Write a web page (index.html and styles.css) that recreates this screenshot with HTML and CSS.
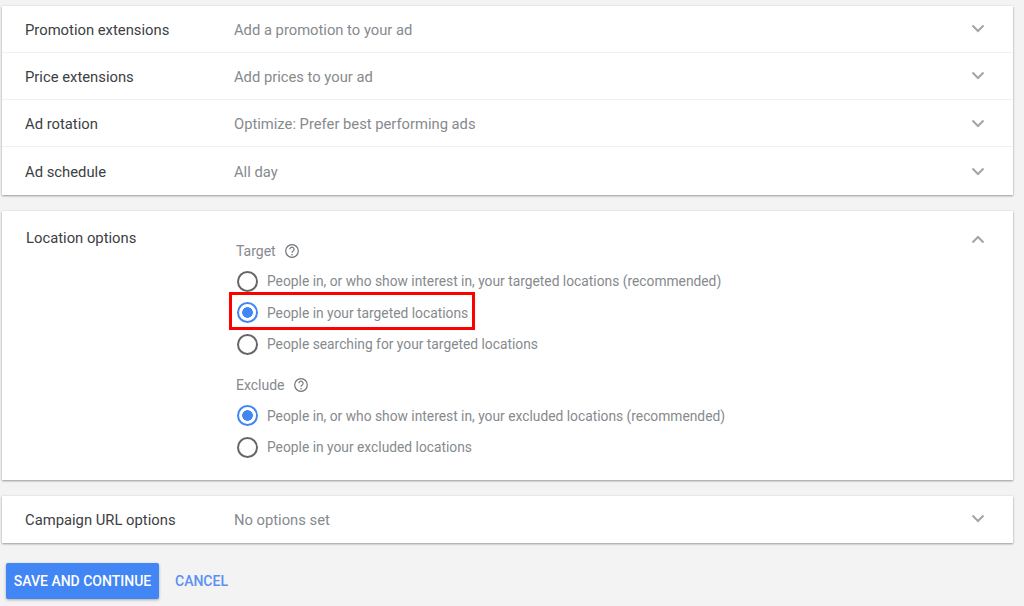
FILE: index.html
```html
<!DOCTYPE html>
<html lang="en">
<head>
<meta charset="utf-8">
<title>Campaign settings</title>
<link rel="stylesheet" href="styles.css">
</head>
<body>
<main class="page">
  <section class="card">
    <div class="row">
      <div class="label">Promotion extensions</div>
      <div class="value">Add a promotion to your ad</div>
      <svg class="chev" viewBox="0 0 14 9"><path d="M1.5 1.5 7 7l5.5-5.5"/></svg>
    </div>
    <div class="row">
      <div class="label">Price extensions</div>
      <div class="value">Add prices to your ad</div>
      <svg class="chev" viewBox="0 0 14 9"><path d="M1.5 1.5 7 7l5.5-5.5"/></svg>
    </div>
    <div class="row">
      <div class="label">Ad rotation</div>
      <div class="value">Optimize: Prefer best performing ads</div>
      <svg class="chev" viewBox="0 0 14 9"><path d="M1.5 1.5 7 7l5.5-5.5"/></svg>
    </div>
    <div class="row">
      <div class="label">Ad schedule</div>
      <div class="value">All day</div>
      <svg class="chev" viewBox="0 0 14 9"><path d="M1.5 1.5 7 7l5.5-5.5"/></svg>
    </div>
  </section>

  <section class="card expanded">
    <div class="label">Location options</div>
    <div class="options">
      <div class="group-title">Target
        <svg class="help" viewBox="0 0 16 16"><circle cx="8" cy="8" r="6.3"/><path d="M5.9 6.3a2.1 2.1 0 1 1 3.3 1.7c-.8.5-1.2.9-1.2 1.8"/><circle class="dot" cx="8" cy="11.8" r=".8"/></svg>
      </div>
      <div class="radio-list">
        <div class="radio-row"><span class="radio"></span>People in, or who show interest in, your targeted locations (recommended)</div>
        <div class="radio-row"><span class="radio on"></span>People in your targeted locations<span class="highlight"></span></div>
        <div class="radio-row"><span class="radio"></span>People searching for your targeted locations</div>
      </div>
      <div class="group-title second">Exclude
        <svg class="help" viewBox="0 0 16 16"><circle cx="8" cy="8" r="6.3"/><path d="M5.9 6.3a2.1 2.1 0 1 1 3.3 1.7c-.8.5-1.2.9-1.2 1.8"/><circle class="dot" cx="8" cy="11.8" r=".8"/></svg>
      </div>
      <div class="radio-list">
        <div class="radio-row"><span class="radio on"></span>People in, or who show interest in, your excluded locations (recommended)</div>
        <div class="radio-row"><span class="radio"></span>People in your excluded locations</div>
      </div>
    </div>
    <svg class="chev up" viewBox="0 0 14 9"><path d="M1.5 7.5 7 2l5.5 5.5"/></svg>
  </section>

  <section class="card">
    <div class="row single">
      <div class="label">Campaign URL options</div>
      <div class="value">No options set</div>
      <svg class="chev" viewBox="0 0 14 9"><path d="M1.5 1.5 7 7l5.5-5.5"/></svg>
    </div>
  </section>

  <div class="actions">
    <button class="btn-primary">SAVE AND CONTINUE</button>
    <button class="btn-link">CANCEL</button>
  </div>
</main>
</body>
</html>
```
FILE: styles.css
```css
* { box-sizing: border-box; }
html, body { margin: 0; height: 100%; }
body {
  background: #f3f3f3;
  font-family: Roboto, "Liberation Sans", sans-serif;
  font-size: 14px;
  overflow: hidden;
}
.page {
  display: flex;
  flex-direction: column;
  gap: 16px;
  padding: 5.5px 11px 0 2px;
}
.card {
  background: #fff;
  box-shadow: 0 1px 2px rgba(0,0,0,.36), 0 0 3px rgba(0,0,0,.06);
}
.row {
  display: flex;
  align-items: center;
  height: 47.33px;
  padding: 2px 28px 0 23px;
  border-bottom: 1px solid #f0f0f0;
}
.row:last-child { border-bottom: 0; }
.row.single { padding-top: 1px; }
.label {
  width: 209px;
  flex: none;
  color: #3c4043;
  font-size: 14.8px;
}
.value {
  flex: 1;
  color: #868a8e;
  font-size: 14.75px;
}
.chev {
  width: 14px;
  height: 9px;
  flex: none;
  margin-top: -2px;
  fill: none;
  stroke: #a2a5a8;
  stroke-width: 2;
}
.chev.up { margin-top: 6px; }
.expanded {
  display: flex;
  align-items: flex-start;
  height: 269px;
  padding: 18px 28px 0 24px;
}
.expanded .label { width: 208px; }
.options {
  flex: 1;
  padding-top: 14px;
  color: #868a8e;
}
.group-title {
  display: flex;
  align-items: center;
  gap: 8px;
  height: 16px;
  margin-left: 2px;
}
.group-title.second { margin-top: 17px; }
.help {
  width: 16px;
  height: 16px;
  fill: none;
  stroke: #70757a;
  stroke-width: 1.2;
}
.help .dot { fill: #70757a; stroke: none; }
.radio-list {
  display: flex;
  flex-direction: column;
  margin-top: 6.8px;
}
.radio-row {
  position: relative;
  display: flex;
  align-items: center;
  gap: 9px;
  height: 31.5px;
  margin-left: 3px;
  font-size: 13.8px;
}
.radio {
  width: 21px;
  height: 21px;
  flex: none;
  border: 2px solid #666;
  border-radius: 50%;
}
.radio.on {
  border-color: #4285f4;
  background: radial-gradient(circle, #4285f4 0 5px, #fff 5.6px);
}
.highlight {
  position: absolute;
  left: -8px;
  top: -5px;
  width: 246px;
  height: 38px;
  border: 3px solid #f00;
}
.actions {
  display: flex;
  align-items: center;
  gap: 16px;
  margin: 3.5px 0 0 4px;
}
.btn-primary {
  width: 153px;
  height: 36px;
  padding: 0;
  border: 0;
  border-radius: 2px;
  background: #4285f4;
  color: #fff;
  font: 500 14px Roboto, "Liberation Sans", sans-serif;
  box-shadow: 0 1px 3px rgba(0,0,0,.3);
}
.btn-link {
  padding: 0;
  border: 0;
  background: none;
  color: #5a8ff5;
  font: 500 14px Roboto, "Liberation Sans", sans-serif;
}
```
